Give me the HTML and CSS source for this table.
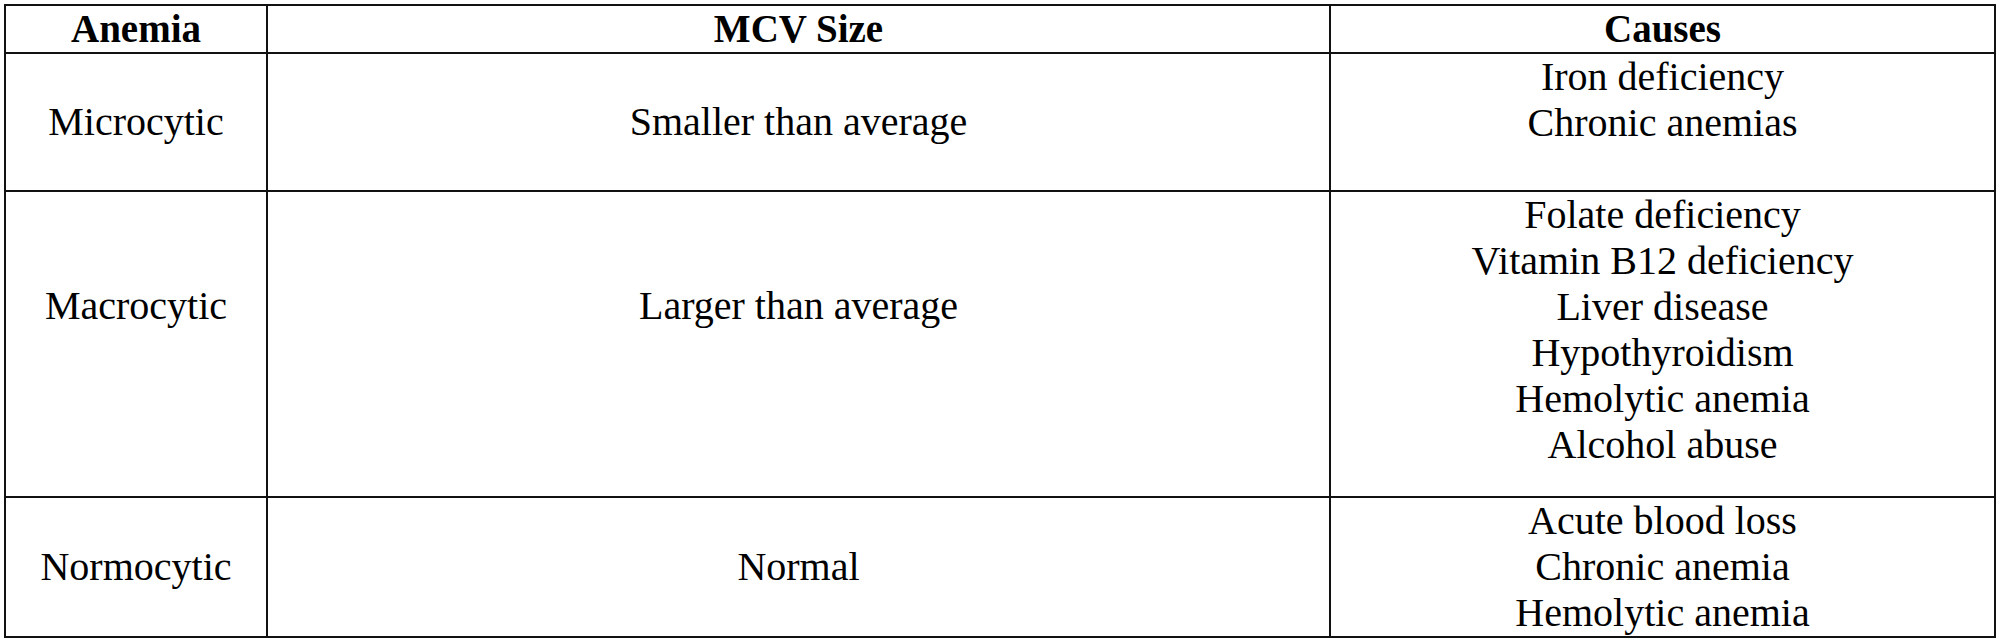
FILE: index.html
```html
<!DOCTYPE html>
<html>
<head>
<meta charset="utf-8">
<link rel="stylesheet" href="styles.css">
</head>
<body>
<table class="anemia-table">
  <colgroup>
    <col class="col-type">
    <col class="col-size">
    <col class="col-causes">
  </colgroup>
  <thead>
    <tr class="row-head">
      <th>Anemia</th>
      <th>MCV Size</th>
      <th>Causes</th>
    </tr>
  </thead>
  <tbody>
    <tr class="row-micro">
      <td class="mid">Microcytic</td>
      <td class="mid">Smaller than average</td>
      <td class="causes">Iron deficiency<br>Chronic anemias</td>
    </tr>
    <tr class="row-macro">
      <td class="mid raised">Macrocytic</td>
      <td class="mid raised">Larger than average</td>
      <td class="causes">Folate deficiency<br>Vitamin B12 deficiency<br>Liver disease<br>Hypothyroidism<br>Hemolytic anemia<br>Alcohol abuse</td>
    </tr>
    <tr class="row-normo">
      <td class="mid">Normocytic</td>
      <td class="mid">Normal</td>
      <td class="causes">Acute blood loss<br>Chronic anemia<br>Hemolytic anemia</td>
    </tr>
  </tbody>
</table>
</body>
</html>
```

FILE: styles.css
```css
html, body {
  margin: 0;
  padding: 0;
  background: #ffffff;
}

body {
  padding: 4px 0 0 4px;
  font-family: "Liberation Serif", "Times New Roman", serif;
  color: #000;
}

.anemia-table {
  border-collapse: collapse;
  table-layout: fixed;
  width: 1990px;
  font-size: 40px;
  line-height: 46px;
}

.col-type { width: 262px; }
.col-size { width: 1063px; }
.col-causes { width: 665px; }

.anemia-table th,
.anemia-table td {
  border: 2px solid #111;
  padding: 0;
  text-align: center;
}

.anemia-table th {
  font-weight: bold;
  font-size: 39px;
  height: 46px;
  vertical-align: middle;
}

.row-head { height: 48px; }
.row-micro { height: 138px; }
.row-macro { height: 306px; }
.row-normo { height: 137px; }

.mid {
  vertical-align: middle;
  padding-top: 4px;
}

.mid.raised {
  padding-top: 0;
  padding-bottom: 76px;
}

.causes {
  vertical-align: top;
}
```
